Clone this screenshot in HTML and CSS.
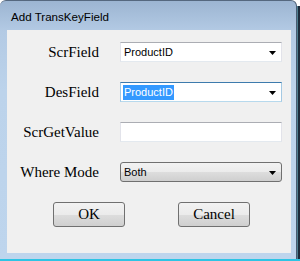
FILE: index.html
```html
<!DOCTYPE html>
<html lang="en">
<head>
  <meta charset="UTF-8" />
  <meta name="viewport" content="width=device-width, initial-scale=1.0" />
  <title>Add TransKeyField</title>
  <link rel="stylesheet" href="styles.css">
</head>
<body>
  <div class="screen">
    <div class="window">
      <div class="titlebar">
        <span class="title">Add TransKeyField</span>
      </div>

      <div class="client">
        <!-- Field rows -->
        <div class="row">
          <label class="lbl">ScrField</label>
          <div class="combo">
            <span class="value">ProductID</span>
            <svg class="arrow" width="7" height="4" viewBox="0 0 7 4"><polygon points="0,0 7,0 3.5,4" /></svg>
          </div>
        </div>

        <div class="row">
          <label class="lbl">DesField</label>
          <div class="combo focused">
            <span class="value selected">ProductID</span>
            <svg class="arrow" width="7" height="4" viewBox="0 0 7 4"><polygon points="0,0 7,0 3.5,4" /></svg>
          </div>
        </div>

        <div class="row">
          <label class="lbl">ScrGetValue</label>
          <div class="textbox"></div>
        </div>

        <div class="row">
          <label class="lbl">Where Mode</label>
          <div class="combo list">
            <span class="value">Both</span>
            <svg class="arrow" width="7" height="4" viewBox="0 0 7 4"><polygon points="0,0 7,0 3.5,4" /></svg>
          </div>
        </div>

        <!-- Dialog buttons -->
        <div class="buttons">
          <button class="btn">OK</button>
          <button class="btn">Cancel</button>
        </div>
      </div>
    </div>
    <div class="side"></div>
  </div>
  <div class="taskline"></div>
</body>
</html>
```

FILE: styles.css
```css
* { box-sizing: border-box; }
body {
  margin: 0;
  width: 300px;
  height: 261px;
  overflow: hidden;
  background: #fff;
  font-family: "Liberation Serif", serif;
}
.screen {
  display: flex;
  height: 259px;
}
.window {
  width: 297px;
  height: 259px;
  border-top: 1px solid #55687f;
  border-right: 1px solid #4a5c72;
  border-radius: 6px 6px 0 0;
  padding: 0 5px 6px 7px;
  background: linear-gradient(#9cb5d2, #b3cae4 30px, #bcd3eb 90px, #bed5ed);
  display: flex;
  flex-direction: column;
}
.titlebar {
  height: 29px;
  display: flex;
  align-items: center;
  padding-left: 4px;
  padding-top: 2px;
}
.title {
  font-family: "Liberation Sans", sans-serif;
  font-size: 11.6px;
  color: #000;
}
.client {
  flex: 1;
  background: #f0f0f0;
  padding-top: 12px;
}
.row {
  display: flex;
  align-items: center;
  height: 20px;
  margin-bottom: 20px;
}
.lbl {
  width: 92px;
  text-align: right;
  font-size: 15px;
  color: #000;
}
.combo, .textbox {
  margin-left: 21px;
  width: 162px;
  height: 20px;
  background: #fff;
  border: 1px solid #e2e3ea;
  border-top-color: #abadb3;
  border-bottom-color: #e3e9ef;
  display: flex;
  align-items: center;
  position: relative;
}
.combo.focused {
  border-color: #a4c9e3;
  border-top-color: #3d7bad;
  border-bottom-color: #b7d9ed;
}
.combo.list {
  border: 1px solid #707070;
  border-radius: 3px;
  background: linear-gradient(#f2f2f2, #ebebeb 50%, #dddddd 51%, #cfcfcf);
}
.value {
  font-family: "Liberation Sans", sans-serif;
  font-size: 11px;
  color: #000;
  margin-left: 2px;
  line-height: 15px;
  padding: 0 1px;
}
.value.selected {
  background: #3399ff;
  color: #fff;
}
.arrow {
  position: absolute;
  right: 5px;
  top: 8px;
  fill: #000;
}
.buttons {
  display: flex;
  gap: 53px;
  padding-left: 46px;
  margin-top: 10px;
}
.btn {
  width: 72px;
  height: 25px;
  border: 1px solid #707070;
  border-radius: 3px;
  background: linear-gradient(#f2f2f2, #ebebeb 50%, #dddddd 51%, #cfcfcf);
  font-family: "Liberation Serif", serif;
  font-size: 15px;
  color: #000;
  padding: 0;
}
.side {
  width: 3px;
  margin-top: 6px;
  background: linear-gradient(90deg, #7fd3e6, #1d2b3b 1px);
}
.taskline {
  height: 2px;
  background: #2ec4e4;
}
```
